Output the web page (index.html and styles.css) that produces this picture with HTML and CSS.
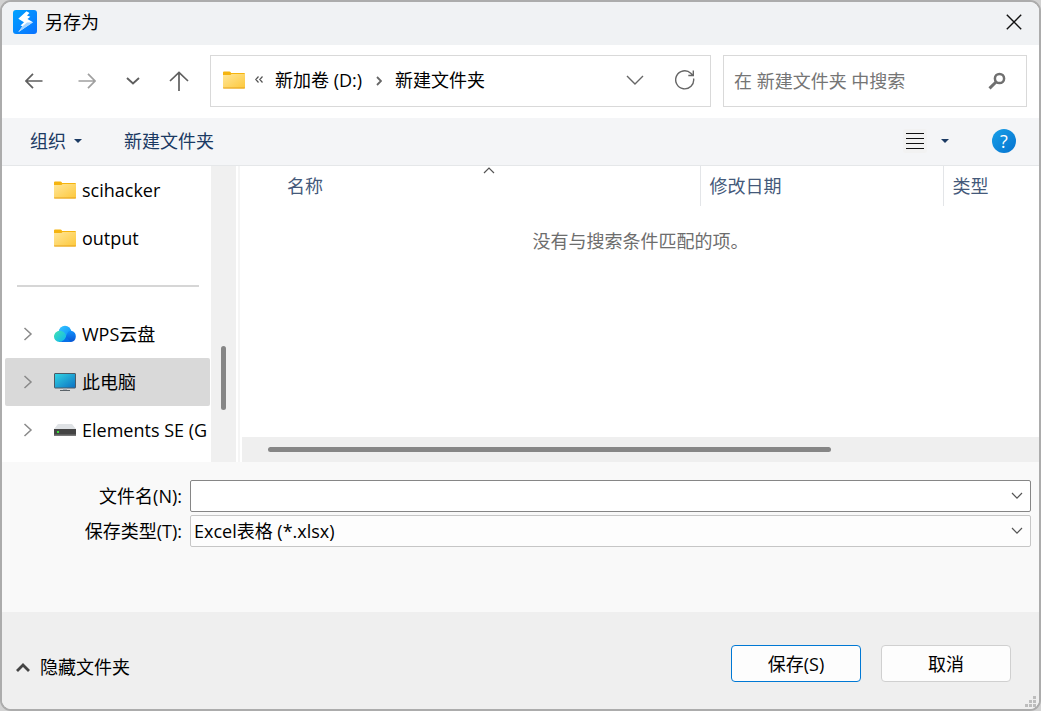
FILE: index.html
```html
<!DOCTYPE html>
<html lang="zh-CN">
<head>
<meta charset="utf-8">
<title>另存为</title>
<link rel="stylesheet" href="styles.css">
</head>
<body>
<svg class="defs" aria-hidden="true">
  <defs>
    <linearGradient id="g-folder" x1="0" y1="0" x2="1" y2="1"><stop offset="0" stop-color="#ffe699"/><stop offset="1" stop-color="#fdc83a"/></linearGradient>
    <linearGradient id="g-app" x1="0" y1="0" x2="1" y2="1"><stop offset="0" stop-color="#00a2ff"/><stop offset="1" stop-color="#0a72ff"/></linearGradient>
    <linearGradient id="g-screen" x1="0" y1="0" x2="1" y2="1"><stop offset="0" stop-color="#33d6e4"/><stop offset="1" stop-color="#0b6fc2"/></linearGradient>
    <linearGradient id="g-cloud-l" x1="0" y1="0" x2="1" y2="1"><stop offset="0" stop-color="#41e3b0"/><stop offset="1" stop-color="#0db2f5"/></linearGradient>
    <linearGradient id="g-cloud-r" x1="0" y1="0" x2="0" y2="1"><stop offset="0" stop-color="#1290fb"/><stop offset="1" stop-color="#0753d2"/></linearGradient>
    <linearGradient id="g-cloud-t" x1="0" y1="0" x2="1" y2="1"><stop offset="0" stop-color="#37c6ff"/><stop offset="1" stop-color="#078cf8"/></linearGradient>
  </defs>
  <symbol id="folder" viewBox="0 0 22 18">
    <path d="M0 1.500Q0 .5 1 .5H6.500Q8 .5 8 2H21Q22 2 22 3V16H0Z" fill="#f5b40f"/>
    <path d="M0 4H7.500L8.500 3H22V16.500Q22 17.500 21 17.500H1Q0 17.500 0 16.500Z" fill="url(#g-folder)"/>
    <path d="M0 16.400H22Q22 17.600 21 17.600H1Q0 17.600 0 16.400Z" fill="#e5a21d"/>
  </symbol>
  <symbol id="chev-right" viewBox="0 0 10 16"><path d="M1.500 2L8 8L1.500 14" fill="none" stroke="#8a8a8a" stroke-width="1.500"/></symbol>
  <symbol id="chev-down" viewBox="0 0 12 8"><path d="M1 1L6 6.200L11 1" fill="none" stroke="#555" stroke-width="1.200"/></symbol>
</svg>

<div class="dialog">
  <header class="titlebar">
    <svg class="app-icon" viewBox="0 0 24 24" aria-hidden="true">
      <rect width="24" height="24" rx="3" fill="url(#g-app)"/>
      <path d="M13.500 1.200L5.300 8.800L11 12.300L7.500 15.500L9.500 16.200L5.200 22.300L20 12.300L14.500 9L17.300 6.800L14 5.500L16.500 3Z" fill="#fff"/>
      <path d="M9.500 16.200L14 12.500L20 12.300L5.200 22.300Z" fill="#a5d3ff"/>
    </svg>
    <h1 class="title">另存为</h1>
    <button class="icon-btn close" aria-label="关闭"><svg width="16" height="16" viewBox="0 0 16 16"><path d="M.8.8L15.200 15.200M15.200.8L.8 15.200" stroke="#111" stroke-width="1.400"/></svg></button>
  </header>

  <nav class="navbar">
    <div class="nav-buttons">
      <button class="icon-btn" aria-label="后退"><svg width="18" height="16" viewBox="0 0 18 16"><path d="M8 .8L1 8L8 15.200M1 8H17.500" fill="none" stroke="#5f5f5f" stroke-width="1.700"/></svg></button>
      <button class="icon-btn forward" aria-label="前进"><svg width="18" height="16" viewBox="0 0 18 16"><path d="M10 .8L17 8L10 15.200M17 8H.5" fill="none" stroke="#a0a0a0" stroke-width="1.700"/></svg></button>
      <button class="icon-btn" aria-label="最近位置"><svg width="14" height="8" viewBox="0 0 14 8"><path d="M1 1L7 6.500L13 1" fill="none" stroke="#5f5f5f" stroke-width="1.900"/></svg></button>
      <button class="icon-btn" aria-label="上移"><svg width="20" height="20" viewBox="0 0 20 20"><path d="M1 10L10 1.500L19 10M10 1.500V20" fill="none" stroke="#5f5f5f" stroke-width="1.700"/></svg></button>
    </div>
    <div class="address">
      <svg class="item-icon" aria-hidden="true"><use href="#folder"/></svg>
      <svg class="overflow-mark" width="8" height="7" viewBox="0 0 8 7" aria-hidden="true"><path d="M3.500.5L.8 3.500L3.500 6.500M7.500.5L4.800 3.500L7.500 6.500" fill="none" stroke="#555" stroke-width="1.200"/></svg>
      <a class="crumb" href="#">新加卷 (D:)</a>
      <svg class="crumb-sep" width="6" height="10" viewBox="0 0 6 10" aria-hidden="true"><path d="M1 1L5 5L1 9" fill="none" stroke="#666" stroke-width="1.800"/></svg>
      <a class="crumb" href="#">新建文件夹</a>
      <button class="icon-btn drop" aria-label="历史"><svg width="18" height="10" viewBox="0 0 18 10"><path d="M1 1L9 9L17 1" fill="none" stroke="#666" stroke-width="1.400"/></svg></button>
      <button class="icon-btn" aria-label="刷新"><svg width="20" height="20" viewBox="0 0 20 20"><path d="M18.600 8.500A9 9 0 1 1 15.800 3.200L18 5.500M18.300.5V5.500H13.300" fill="none" stroke="#666" stroke-width="1.400"/></svg></button>
    </div>
    <form class="search">
      <input class="search-input" type="search" placeholder="在 新建文件夹 中搜索" aria-label="在 新建文件夹 中搜索">
      <button class="icon-btn" type="button" aria-label="搜索"><svg width="18" height="18" viewBox="0 0 18 18"><circle cx="11.500" cy="6.500" r="4.600" fill="none" stroke="#707070" stroke-width="2.500"/><path d="M8 10L1.500 16.300" stroke="#707070" stroke-width="3"/></svg></button>
    </form>
  </nav>

  <div class="toolbar">
    <button class="tool-btn">组织<svg width="8" height="4" viewBox="0 0 8 4"><path d="M0 0H8L4 4Z" fill="#1b3a63"/></svg></button>
    <button class="tool-btn">新建文件夹</button>
    <div class="view-tools">
      <button class="icon-btn view" aria-label="视图"><svg width="18" height="17" viewBox="0 0 18 17"><path d="M0 1H18M0 6H18M0 11H18M0 16H18" stroke="#111" shape-rendering="crispEdges"/></svg></button>
      <button class="icon-btn view-drop" aria-label="更多视图"><svg width="8" height="4" viewBox="0 0 8 4"><path d="M0 0H8L4 4Z" fill="#1b3a63"/></svg></button>
      <button class="help" aria-label="帮助">?</button>
    </div>
  </div>

  <div class="browser">
    <div class="sidebar">
      <ul class="tree">
        <li class="node"><span class="toggle"></span><svg class="item-icon"><use href="#folder"/></svg><span>scihacker</span></li>
        <li class="node"><span class="toggle"></span><svg class="item-icon"><use href="#folder"/></svg><span>output</span></li>
        <li class="divider"><hr class="rule"></li>
        <li class="node"><svg class="toggle"><use href="#chev-right"/></svg>
          <svg class="item-icon" viewBox="0 0 22 18"><circle cx="11" cy="7" r="6.200" fill="url(#g-cloud-t)"/><path d="M9 17L14 7Q16 5.400 18 6A5.700 5.700 0 0 1 17 17Z" fill="url(#g-cloud-r)"/><path d="M5.800 17A5.600 5.600 0 1 1 8.500 6.600Q13 8.500 11.800 13Q10.500 17 5.800 17Z" fill="url(#g-cloud-l)"/><path d="M5 17Q10 16.500 12 12L17 17Z" fill="#0870e8"/></svg>
          <span>WPS云盘</span></li>
        <li class="node selected"><svg class="toggle"><use href="#chev-right"/></svg>
          <svg class="item-icon" viewBox="0 0 22 18"><rect x=".5" y=".5" width="21" height="14.500" rx=".5" fill="url(#g-screen)" stroke="#4c5a66"/><path d="M9 15.500H13V17H9Z" fill="#a6b0b8"/><path d="M6 17.500H16" stroke="#5a6268"/></svg>
          <span>此电脑</span></li>
        <li class="node"><svg class="toggle"><use href="#chev-right"/></svg>
          <svg class="item-icon" viewBox="0 0 22 18"><path d="M4 3H18L22 8H0Z" fill="#dfe2e5"/><rect y="8" width="22" height="7" fill="#444"/><rect y="13.500" width="22" height="1.500" fill="#777"/><rect x="3" y="10" width="2" height="2" fill="#3be03b"/></svg>
          <span>Elements SE (G</span></li>
      </ul>
      <div class="vscroll"><div class="vthumb"></div></div>
    </div>
    <div class="files">
      <table class="list">
        <thead><tr><td class="col-mark"></td><th class="col-name">名称<svg class="sort" width="12" height="7" viewBox="0 0 12 7"><path d="M1 6L6 1L11 6" fill="none" stroke="#555" stroke-width="1.200"/></svg></th><th class="col-date">修改日期</th><th class="col-type">类型</th></tr></thead>
        <tbody><tr><td class="empty" colspan="4">没有与搜索条件匹配的项。</td></tr></tbody>
      </table>
      <div class="hscroll"><div class="hthumb"></div></div>
    </div>
  </div>

  <form class="fields">
    <label class="label" for="fname">文件名(N):</label>
    <div class="combo">
      <input class="control name" id="fname" type="text">
      <svg class="combo-arrow" aria-hidden="true"><use href="#chev-down"/></svg>
    </div>
    <label class="label" for="ftype">保存类型(T):</label>
    <div class="combo">
      <select class="control type" id="ftype"><option>Excel表格 (*.xlsx)</option></select>
      <svg class="combo-arrow" aria-hidden="true"><use href="#chev-down"/></svg>
    </div>
  </form>

  <footer class="footer">
    <button class="hide-btn"><svg width="14" height="9" viewBox="0 0 14 9"><path d="M1 8L7 2L13 8" fill="none" stroke="#444" stroke-width="2.800"/></svg>隐藏文件夹</button>
    <button class="btn primary">保存(S)</button>
    <button class="btn">取消</button>
    <svg class="grip" width="11" height="11" viewBox="0 0 11 11" aria-hidden="true"><path d="M8 0h3v3h-3zM4 4h3v3h-3zM8 4h3v3h-3zM0 8h3v3h-3zM4 8h3v3h-3zM8 8h3v3h-3z" fill="#bdbdbd"/></svg>
  </footer>
</div>
</body>
</html>
```
FILE: styles.css
```css
* { box-sizing: border-box; }

body {
  margin: 0;
  height: 100vh;
  background: #d2d2d2;
  color: #000;
  font: 18px/24px "Open Sans", "Noto Sans CJK SC", sans-serif;
}

button, input, select {
  font: inherit;
  color: inherit;
}

button {
  padding: 0;
  border: 0;
  background: none;
}

.defs { position: absolute; width: 0; height: 0; }

.dialog {
  display: flex;
  flex-direction: column;
  height: 100%;
  border: 2px solid #acacac;
  border-radius: 11px;
  background: #fff;
  overflow: hidden;
}

.icon-btn {
  display: flex;
  align-items: center;
  justify-content: center;
}

.item-icon { flex: none; width: 22px; height: 18px; }

/* Title bar */
.titlebar {
  display: flex;
  align-items: center;
  height: 43px;
  padding: 0 17px 3px 11px;
  background: #f0f2f4;
}
.app-icon { width: 24px; height: 24px; }
.title { margin: 0 0 0 8px; font-size: 18px; line-height: 24px; font-weight: 400; }
.close { margin-left: auto; }

/* Navigation */
.navbar {
  display: grid;
  grid-template-columns: 178px 501fr 304fr;
  align-items: center;
  height: 73px;
  padding: 0 12px 2px 18px;
  gap: 12px;
}
.nav-buttons { display: flex; gap: 18px; }
.nav-buttons .icon-btn { width: 28px; height: 28px; }
.nav-buttons .forward { margin-left: 7px; }
.address, .search {
  display: flex;
  align-items: center;
  min-width: 0;
  height: 52px;
  border: 1px solid #d9d9d9;
}
.address { padding: 0 15px 2px 12px; }
.overflow-mark { margin: 0 12px 0 10px; }
.crumb { color: #000; text-decoration: none; white-space: nowrap; }
.crumb-sep { margin: 2px 13px 0 14px; }
.drop { margin: 0 31px 0 auto; }
.search { padding: 0 20px 0 10px; }
.search-input {
  flex: 1;
  min-width: 0;
  padding: 0;
  border: 0;
  outline: 0;
  background: none;
  appearance: none;
}
.search-input::placeholder { color: #757575; opacity: 1; }

/* Toolbar */
.toolbar {
  display: flex;
  align-items: center;
  gap: 42px;
  height: 48px;
  padding: 0 23px 2px 28px;
  border-bottom: 1px solid #e5e7e9;
  background: #f4f5f7;
  color: #1b3a63;
}
.tool-btn { display: flex; align-items: center; gap: 8px; }
.view-tools { display: flex; align-items: center; margin-left: auto; }
.view { width: 24px; height: 24px; border-radius: 2px; background: #f2f2f2; }
.view-drop { margin: 0 43px 0 14px; }
.help {
  width: 24px;
  height: 24px;
  border-radius: 50%;
  background: linear-gradient(135deg, #18a0e8, #0672cf);
  color: #fff;
}

/* Browser */
.browser { display: flex; flex: 1; min-height: 0; }
.sidebar {
  display: flex;
  flex: none;
  width: 236px;
  border-right: 2px solid #fff;
}
.tree {
  flex: 1;
  min-width: 0;
  margin: 0;
  padding: 0 1px 0 3px;
  list-style: none;
  overflow: hidden;
}
.node {
  display: flex;
  align-items: center;
  height: 48px;
  padding-left: 18px;
  border-radius: 2px;
  white-space: nowrap;
  overflow: hidden;
}
.toggle { flex: none; width: 10px; height: 16px; margin-right: 21px; }
.node .item-icon { margin-right: 6px; }
.selected { background: #d9d9d9; }
.divider { display: flex; align-items: center; height: 48px; }
.rule { flex: 1; height: 2px; margin: 0 11px 0 12px; border: 0; background: #d6d6d6; }
.vscroll { width: 25px; padding: 180px 10px 0; background: #f0f0f0; }
.vthumb { height: 64px; border-radius: 3px; background: #868686; }

.files {
  display: flex;
  flex: 1;
  flex-direction: column;
  min-width: 0;
  border-left: 2px solid #f5f5f5;
  padding-left: 2px;
}
.list { width: 100%; border-collapse: collapse; table-layout: fixed; }
.list th {
  position: relative;
  height: 40px;
  padding: 0 9px;
  color: #44597a;
  font-weight: 400;
  text-align: left;
}
.col-mark { width: 36px; padding: 0; }
.col-date { width: 243px; border-left: 1px solid #e3e5e8; }
.col-type { width: 96px; border-left: 1px solid #e3e5e8; }
.sort { position: absolute; top: 1px; left: 50%; margin-left: -6px; }
.empty { padding: 23px 0 0; color: #6d6d6d; text-align: center; }
.hscroll { height: 25px; margin-top: auto; padding: 10px 208px 0 26px; background: #efefef; }
.hthumb { height: 5px; border-radius: 3px; background: #868686; }

/* File name and type */
.fields {
  display: grid;
  flex: none;
  grid-template-columns: 180px 1fr;
  align-items: center;
  gap: 3px 8px;
  padding: 18px 8px 65px 0;
  background: #f9f9f9;
}
.label { text-align: right; }
.combo { position: relative; }
.control {
  display: block;
  width: 100%;
  height: 32px;
  padding: 0 32px 0 3px;
  border-radius: 2px;
  outline: 0;
  appearance: none;
}
.name { border: 1px solid #868686; background: #fff; }
.type { border: 1px solid #c6c6c6; background: #fdfdfd; }
.combo-arrow {
  position: absolute;
  top: 12px;
  right: 8px;
  width: 12px;
  height: 8px;
  pointer-events: none;
}

/* Footer */
.footer {
  position: relative;
  display: flex;
  align-items: center;
  flex: none;
  gap: 20px;
  height: 97px;
  padding: 6px 28px 0 14px;
  background: #efefef;
}
.hide-btn { display: flex; align-items: center; gap: 10px; margin: 7px auto 0 0; }
.btn {
  width: 130px;
  height: 37px;
  border: 1px solid #d0d0d0;
  border-radius: 4px;
  background: #fdfdfd;
}
.primary { border-color: #0078d4; }
.grip { position: absolute; right: 3px; bottom: 2px; }
```
